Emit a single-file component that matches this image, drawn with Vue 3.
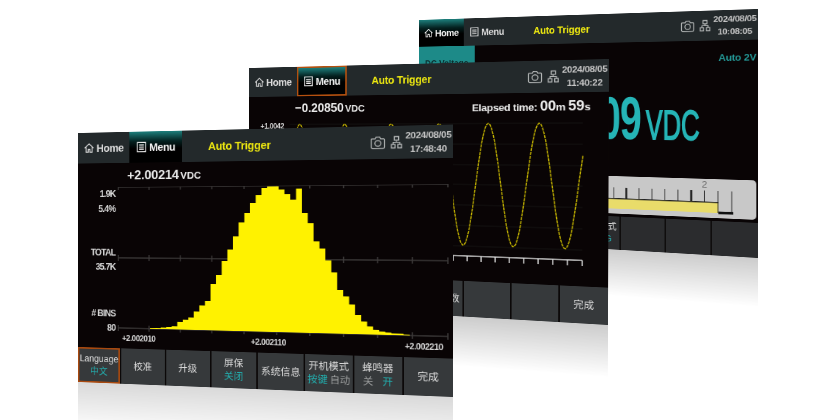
<template>
  <div class="stage">
    <section
      v-for="s in screens"
      :key="s.id"
      class="screen"
      :class="'screen--' + s.id"
      :style="{ transform: quadMatrix(s.quad) }"
    >
      <div class="reflection"></div>

      <header class="topbar">
        <div class="tab" :class="{ 'tab--on': s.active === 'home' }">
          <svg class="tab__icon" viewBox="0 0 16 16">
            <path d="M1.5 8 8 2l6.500 6M3.500 7v7h3.200v-4h2.600v4h3.200V7" fill="none" stroke="currentColor" stroke-width="1.400" />
          </svg>
          Home
        </div>
        <div class="tab" :class="{ 'tab--on': s.active === 'menu', 'tab--focus': s.focusMenu }">
          <svg class="tab__icon" viewBox="0 0 16 16">
            <path d="M2 1.500h12v13H2z" fill="none" stroke="currentColor" stroke-width="1.400" />
            <path d="M4.500 5h7M4.500 8h7M4.500 11h7" stroke="currentColor" stroke-width="1.500" />
          </svg>
          Menu
        </div>
        <div class="topbar__title">Auto Trigger</div>
        <svg class="cam" viewBox="0 0 20 18">
          <path d="M2.500 4h4l1.200-2.400h4.600L13.500 4h4a1 1 0 0 1 1 1v10a1.500 1.500 0 0 1-1.500 1.500H3A1.500 1.500 0 0 1 1.500 15V5a1 1 0 0 1 1-1z" fill="none" stroke="currentColor" stroke-width="1.300" />
          <circle cx="10" cy="10" r="3.800" fill="none" stroke="currentColor" stroke-width="1.300" />
        </svg>
        <svg class="net" viewBox="0 0 16 18">
          <path d="M5 1h6v5H5zM1 12h5v5H1zM10 12h5v5h-5z" fill="none" stroke="currentColor" stroke-width="1.500" />
          <path d="M8 6v3M3.500 12V9h9v3" fill="none" stroke="currentColor" stroke-width="1.300" />
        </svg>
        <div class="clock">
          <div>2024/08/05</div>
          <div>{{ s.time }}</div>
        </div>
      </header>

      <main class="body">
        <template v-if="s.id === 'hist'">
          <div class="reading"><b>+2.00214</b><span>VDC</span></div>
          <svg class="plot" viewBox="0 73 480 214">
            <g v-for="y in [73, 167, 260]" :key="y">
              <line x1="56" x2="474" :y1="y" :y2="y" class="grid" />
              <line v-for="x in histTicks" :key="x" :x1="x" :x2="x" :y1="y - 4" :y2="y + 4" class="grid" />
            </g>
            <path :d="histPath" fill="#fff200" />
            <text v-for="l in histLabels" :key="l.t" x="52" :y="l.y" class="axis" text-anchor="end">{{ l.t }}</text>
            <text x="61" y="277" class="axis axis--small">+2.002010</text>
            <text x="232" y="277" class="axis axis--small">+2.002110</text>
            <text x="423" y="277" class="axis axis--small">+2.002210</text>
          </svg>
        </template>

        <template v-else-if="s.id === 'trend'">
          <div class="reading reading--split">
            <div><b>−0.20850</b><span>VDC</span></div>
            <div class="elapsed">Elapsed time: <b>00</b>m <b>59</b>s</div>
          </div>
          <svg class="plot" viewBox="0 73 480 214">
            <line v-for="y in [80, 107, 134, 160, 187, 214, 241]" :key="y" x1="60" x2="449" :y1="y" :y2="y" class="grid grid--faint" />
            <polyline :points="wavePoints" fill="none" stroke="#c4b400" stroke-width="1.500" stroke-dasharray="4 1" />
            <line x1="60" x2="449" y1="254" y2="254" class="axis-line" />
            <line v-for="x in trendTicks" :key="x" :x1="x" :x2="x" y1="254" y2="261" class="axis-line" />
            <text x="52" y="86" class="axis axis--small" text-anchor="end">+1.0042</text>
          </svg>
        </template>

        <template v-else>
          <div class="meta">
            <div class="meta__tab">DC Voltage</div>
            <div class="meta__range">Auto 2V</div>
          </div>
          <div class="big">
            <div class="big__num">+2.00009</div>
            <div class="big__unit"><span>VDC</span></div>
          </div>
          <div class="gauge">
            <svg class="gauge__svg" viewBox="0 0 480 53">
              <rect x="20" y="32" width="412" height="14" fill="#e9dc6a" />
              <rect x="20" y="31" width="412" height="1.500" fill="#222" />
              <rect x="432" y="44" width="19" height="3.500" fill="#111" />
              <line
                v-for="t in gaugeTicks"
                :key="t.x"
                :x1="t.x"
                :x2="t.x"
                y1="16"
                :y2="t.x > 430 ? 46 : 31"
                stroke="#222"
                :stroke-width="t.major ? 2.600 : 1"
              />
              <text x="414" y="12" class="gauge__label" text-anchor="middle">2</text>
            </svg>
          </div>
        </template>
      </main>

      <footer class="softkeys">
        <div v-for="(k, i) in s.keys" :key="i" class="key" :class="{ 'key--focus': k.focus }">
          <div v-if="k.top">{{ k.top }}</div>
          <div v-if="k.sub" class="key__sub">{{ k.sub }}</div>
          <div v-if="k.pair" class="key__pair">
            <span :class="{ cyan: k.on === 0 }">{{ k.pair[0] }}</span>
            <span :class="{ cyan: k.on === 1 }">{{ k.pair[1] }}</span>
          </div>
        </div>
      </footer>
    </section>
  </div>
</template>

<script setup>
const W = 480;
const H = 334;

// rectangle -> quad homography, the panels sit in perspective
const quadMatrix = (q) => {
  const [[x0, y0], [x1, y1], [x2, y2], [x3, y3]] = q;
  const sx = x0 - x1 + x2 - x3;
  const sy = y0 - y1 + y2 - y3;
  const dx1 = x1 - x2;
  const dx2 = x3 - x2;
  const dy1 = y1 - y2;
  const dy2 = y3 - y2;
  const den = dx1 * dy2 - dx2 * dy1;
  const g = (sx * dy2 - dx2 * sy) / den;
  const h = (dx1 * sy - sx * dy1) / den;
  const a = x1 - x0 + g * x1;
  const b = x3 - x0 + h * x3;
  const d = y1 - y0 + g * y1;
  const e = y3 - y0 + h * y3;
  const m = [a / W, d / W, 0, g / W, b / H, e / H, 0, h / H, 0, 0, 1, 0, x0, y0, 0, 1];
  return `matrix3d(${m.join(',')})`;
};

const histBars = [
  1, 1, 2, 3, 4, 10, 13, 16, 24, 32, 38, 60, 72, 90, 105, 122, 140, 152, 165, 175, 184, 186, 186,
  182, 176, 169, 183, 152, 139, 116, 107, 92, 77, 55, 47, 37, 24, 16, 10, 6, 4, 3, 2, 2, 1,
];
const histPath =
  'M99 260' +
  histBars
    .map((h, i) => `V${260 - h}H${(99 + (i + 1) * 7.330).toFixed(2)}`)
    .join('') +
  'V260Z';
const histTicks = Array.from({ length: 11 }, (_, i) => 56 + i * 41.800);
const histLabels = [
  { t: '1.9K', y: 86 },
  { t: '5.4%', y: 106 },
  { t: 'TOTAL', y: 164 },
  { t: '35.7K', y: 183 },
  { t: '# BINS', y: 245 },
  { t: '80', y: 264 },
];

const trendTicks = Array.from({ length: 22 }, (_, i) => 71 + i * 18);
const wavePoints = Array.from({ length: 190 }, (_, i) => {
  const x = 60 + i * 2.060;
  return `${x.toFixed(1)},${(160 - 80 * Math.cos(((x - 75) / 64.200) * 2 * Math.PI)).toFixed(1)}`;
}).join(' ');

const gaugeTicks = Array.from({ length: 26 }, (_, i) => ({
  x: 449 - i * 17.400,
  major: (i + 2) % 5 === 0,
}));

const screens = [
  {
    id: 'bar',
    quad: [[419, 20], [758, 9], [758, 258], [419, 238]],
    active: 'home',
    time: '10:08:05',
    keys: [
      { top: '' }, { top: '' }, { top: '' }, { top: '' },
      { top: '测量模式', sub: 'RANG' },
      { top: '' }, { top: '' }, { top: '' },
    ],
  },
  {
    id: 'trend',
    quad: [[249, 68], [609, 59], [608, 325], [249, 304]],
    active: 'menu',
    focusMenu: true,
    time: '11:40:22',
    keys: [
      { top: '' }, { top: '' }, { top: '' }, { top: '' },
      { top: '系统参数' },
      { top: '' }, { top: '' },
      { top: '完成' },
    ],
  },
  {
    id: 'hist',
    quad: [[78, 133], [453, 124.500], [453, 397], [78, 382]],
    active: 'menu',
    time: '17:48:40',
    keys: [
      { top: 'Language', sub: '中文', focus: true },
      { top: '校准' },
      { top: '升级' },
      { top: '屏保', sub: '关闭' },
      { top: '系统信息' },
      { top: '开机模式', pair: ['按键', '自动'], on: 0 },
      { top: '蜂鸣器', pair: ['关', '开'], on: 1 },
      { top: '完成' },
    ],
  },
];
</script>

<style scoped>
.stage {
  position: relative;
  width: 840px;
  height: 420px;
  overflow: hidden;
  background: #fff;
  font-family: "Liberation Sans", "Noto Sans CJK SC", sans-serif;
}

.screen {
  position: absolute;
  left: 0;
  top: 0;
  width: 480px;
  height: 334px;
  transform-origin: 0 0;
  display: flex;
  flex-direction: column;
  background: #090405;
  color: #e6e6e6;
  filter: blur(0.5px);
}

.reflection {
  position: absolute;
  left: 0;
  right: 0;
  top: 100%;
  height: 66px;
  background: linear-gradient(rgba(0, 0, 0, 0.2), rgba(0, 0, 0, 0));
}

.screen--hist .reflection {
  background: linear-gradient(rgba(0, 0, 0, 0.15), rgba(0, 0, 0, 0));
}

.topbar {
  flex: none;
  height: 41px;
  display: flex;
  align-items: center;
  background: #23292b;
}

.tab {
  flex: none;
  width: 71px;
  height: 100%;
  box-sizing: border-box;
  display: flex;
  align-items: center;
  justify-content: center;
  gap: 3px;
  font-size: 14px;
  font-weight: 700;
  letter-spacing: -0.4px;
  color: #dcdcdc;
}

.tab__icon {
  width: 15px;
  height: 15px;
}

.tab--on {
  color: #f2f2f2;
  background: linear-gradient(#1d7f7c 0, #04201f 32%, #000 55%);
}

.tab--focus {
  border: 2px solid #b4500f;
}

.topbar__title {
  width: 150px;
  text-align: center;
  font-size: 14px;
  font-weight: 700;
  letter-spacing: -0.2px;
  color: #f0ea10;
}

.cam {
  width: 19px;
  height: 17px;
  margin-left: 89px;
  color: #b5b8b8;
}

.net {
  width: 14px;
  height: 17px;
  margin-left: 6px;
  color: #b5b8b8;
}

.clock {
  margin-left: auto;
  width: 58px;
  text-align: center;
  font-size: 11.500px;
  font-weight: 700;
  line-height: 17px;
  letter-spacing: -0.3px;
  white-space: nowrap;
  color: #c6c6c6;
}

.body {
  flex: 1;
  min-height: 0;
  display: flex;
  flex-direction: column;
}

.reading {
  flex: none;
  height: 32px;
  padding: 7px 22px 0 68px;
  box-sizing: border-box;
  font-weight: 700;
  color: #ececec;
  white-space: nowrap;
}

.reading b {
  font-size: 17px;
  letter-spacing: -0.2px;
}

.reading span {
  font-size: 13px;
  margin-left: 2px;
}

.reading--split {
  display: flex;
  justify-content: space-between;
}

.elapsed {
  font-size: 13.500px;
  letter-spacing: -0.4px;
}

.elapsed b {
  font-size: 18px;
}

.plot {
  display: block;
  width: 480px;
  height: 214px;
  flex: none;
}

.grid {
  stroke: #3d3a3a;
  stroke-width: 1.500;
}

.grid--faint {
  stroke: #161414;
  stroke-width: 1;
}

.axis {
  fill: #d8d8d8;
  font-size: 12px;
  font-weight: 700;
  letter-spacing: -0.9px;
}

.axis--small {
  font-size: 10.500px;
  letter-spacing: -0.5px;
}

.axis-line {
  stroke: #d8d8d8;
  stroke-width: 1.500;
}

.meta {
  flex: none;
  height: 50px;
  display: flex;
  justify-content: space-between;
}

.meta__tab {
  width: 88px;
  height: 50px;
  line-height: 52px;
  text-align: center;
  font-size: 13px;
  font-weight: 700;
  color: #0b2c2c;
  background: #1d8a88;
}

.meta__range {
  padding: 16px 2px 0 0;
  font-size: 13px;
  font-weight: 700;
  letter-spacing: -0.2px;
  color: #249a98;
}

.big {
  flex: none;
  height: 118px;
  margin-top: -3px;
  display: flex;
  justify-content: flex-end;
  align-items: baseline;
  padding-right: 74px;
  font-weight: 700;
  color: #25b4b6;
  line-height: 118px;
}

.big__num {
  font-size: 86px;
  letter-spacing: -2px;
  white-space: nowrap;
  transform: scaleX(0.62);
  transform-origin: right;
}

.big__unit {
  width: 70px;
  margin-left: 8px;
  display: flex;
  justify-content: flex-end;
  font-size: 58px;
  font-weight: 400;
  -webkit-text-stroke: 2px #25b4b6;
  transform: scaleX(0.58);
  transform-origin: right;
}

.gauge {
  flex: none;
  height: 53px;
  margin: auto 2px 4px 0;
  background: #c8c8c8;
  border-radius: 0 5px 5px 0;
}

.gauge__svg {
  display: block;
  width: 478px;
  height: 53px;
}

.gauge__label {
  fill: #666;
  font-size: 13px;
}

.softkeys {
  flex: none;
  height: 47px;
  display: grid;
  grid-template-columns: repeat(8, 1fr);
  gap: 2px;
  background: #0b0808;
}

.screen--bar .softkeys {
  background: #0f0d0d;
}

.key {
  display: flex;
  flex-direction: column;
  align-items: center;
  justify-content: center;
  gap: 3px;
  box-sizing: border-box;
  background: #36393b;
  font-size: 12.500px;
  line-height: 14px;
  white-space: nowrap;
  color: #dddddd;
}

.screen--bar .key {
  background: #2b2c2e;
}

.key--focus {
  border: 2px solid #a8490f;
  font-size: 12px;
}

.key__sub {
  color: #22b0b0;
}

.key__pair {
  width: 100%;
  display: flex;
  justify-content: space-evenly;
  color: #9a9c9c;
}

.cyan {
  color: #22b0b0;
}
</style>
